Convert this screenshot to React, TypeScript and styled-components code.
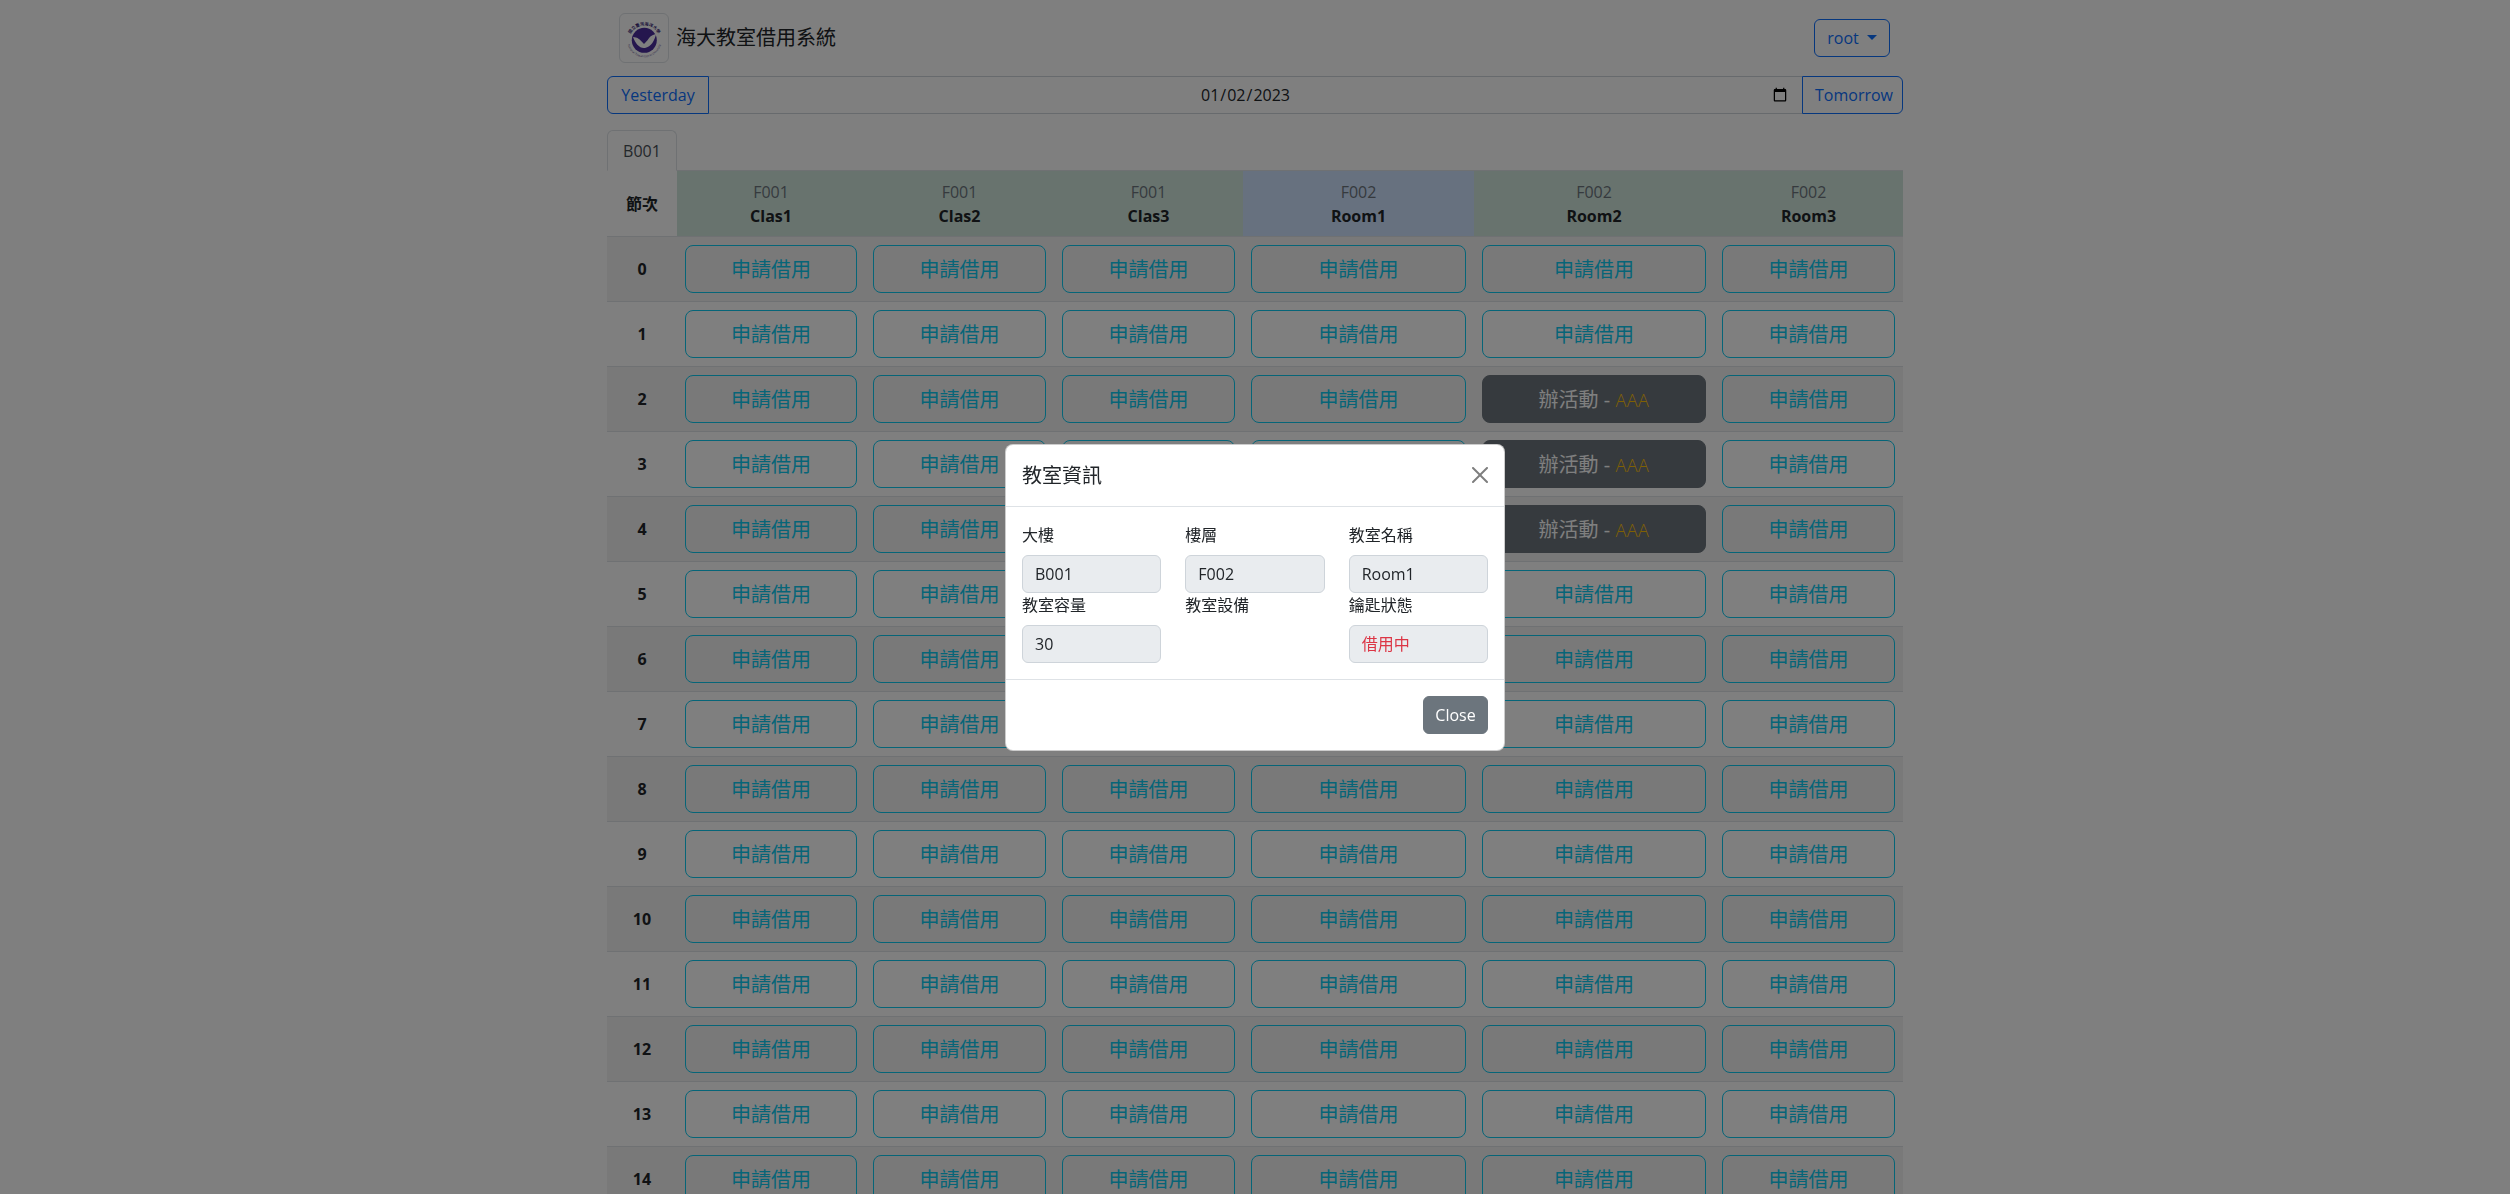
import { createGlobalStyle, styled } from "styled-components";

const GlobalStyle = createGlobalStyle`
  html, body {
    margin: 0;
    height: 100%;
    overflow: hidden;
    background: #fff;
  }
  body {
    font-family: "Open Sans", "Noto Sans CJK TC", sans-serif;
    font-size: 16px;
    line-height: 24px;
    color: #212529;
  }
  * {
    box-sizing: border-box;
  }
`;

const Container = styled.div`
  width: 1296px;
  margin: 0 auto;
`;

const Navbar = styled.nav`
  height: 76px;
  display: flex;
  align-items: center;
  justify-content: space-between;
  padding: 0 13px 0 12px;
`;

const Brand = styled.div`
  display: flex;
  align-items: center;
  gap: 7px;
  font-size: 20px;
  line-height: 24px;
  padding-bottom: 1px;
`;

const Thumbnail = styled.div`
  width: 50px;
  height: 50px;
  padding: 4px;
  border: 1px solid #dee2e6;
  border-radius: 6px;
  background: #fff;
  display: flex;
  flex: none;
`;

const OutlineButton = styled.button`
  height: 38px;
  padding: 0 12px;
  font: inherit;
  color: #0d6efd;
  background: transparent;
  border: 1px solid #0d6efd;
  border-radius: 6px;
`;

const UserButton = styled(OutlineButton)`
  width: 76px;
  display: flex;
  align-items: center;
  justify-content: center;
  gap: 8px;
  &::after {
    content: "";
    border-top: 5px solid #0d6efd;
    border-left: 5px solid transparent;
    border-right: 5px solid transparent;
    margin-top: -2px;
  }
`;

const DateGroup = styled.div`
  display: flex;
  height: 38px;
`;

const YesterdayButton = styled(OutlineButton)`
  width: 102px;
  border-radius: 6px 0 0 6px;
`;

const TomorrowButton = styled(OutlineButton)`
  width: 101px;
  border-radius: 0 6px 6px 0;
`;

const DateInput = styled.input`
  flex: 1;
  min-width: 0;
  height: 38px;
  padding: 6px 12px;
  font: inherit;
  color: #212529;
  text-align: center;
  background: #fff;
  border: 1px solid #ced4da;
  border-left: 0;
  border-right: 0;
`;

const Tabs = styled.div`
  margin-top: 16px;
  height: 41px;
  display: flex;
  border-bottom: 1px solid #dee2e6;
`;

const Tab = styled.div`
  width: 70px;
  height: 41px;
  padding-top: 8px;
  text-align: center;
  color: #495057;
  background: #fff;
  border: 1px solid #dee2e6;
  border-bottom-color: #fff;
  border-radius: 6px 6px 0 0;
`;

const Table = styled.table`
  width: 1296px;
  table-layout: fixed;
  border-collapse: separate;
  border-spacing: 0;
`;

const HeadCell = styled.th<{ $tone?: "green" | "blue" }>`
  height: 66px;
  padding: 0 8px;
  text-align: center;
  font-weight: 700;
  background: ${({ $tone }) =>
    $tone === "green" ? "#d1e7dd" : $tone === "blue" ? "#cfe2ff" : "#fff"};
  border-bottom: 1px solid #dee2e6;
`;

const Floor = styled.div`
  font-weight: 400;
  color: #6c757d;
`;

const Row = styled.tr`
  &:nth-child(odd) td {
    background: #f2f2f2;
  }
`;

const Cell = styled.td`
  height: 65px;
  padding: 8px;
  text-align: center;
  vertical-align: middle;
  background: #fff;
  border-bottom: 1px solid #dee2e6;
`;

const PeriodCell = styled(Cell)`
  font-weight: 700;
`;

const SlotButton = styled.button`
  display: block;
  width: 100%;
  height: 48px;
  padding: 2px 0 0;
  font: inherit;
  font-size: 20px;
  color: #0dcaf0;
  background: transparent;
  border: 1px solid #0dcaf0;
  border-radius: 8px;
`;

const BookedButton = styled(SlotButton)`
  color: #fff;
  background: #6c757d;
  border-color: #6c757d;
`;

const Borrower = styled.span`
  color: #ffc107;
  font-size: 18px;
  font-weight: 300;
  letter-spacing: 0.5px;
`;

const Backdrop = styled.div`
  position: fixed;
  inset: 0;
  background: rgba(0, 0, 0, 0.5);
`;

const ModalLayer = styled.div`
  position: fixed;
  inset: 0;
  display: flex;
  align-items: center;
  justify-content: center;
`;

const Modal = styled.div`
  width: 500px;
  background: #fff;
  border: 1px solid rgba(0, 0, 0, 0.2);
  border-radius: 8px;
`;

const ModalHeader = styled.div`
  height: 62px;
  padding: 0 16px;
  display: flex;
  align-items: center;
  justify-content: space-between;
  border-bottom: 1px solid #dee2e6;
  font-size: 20px;
`;

const ModalTitle = styled.span`
  padding-top: 2px;
`;

const CloseIcon = styled.svg`
  width: 16px;
  height: 16px;
  opacity: 0.5;
  fill: #000;
`;

const ModalBody = styled.div`
  padding: 16px;
  display: grid;
  grid-template-columns: repeat(3, 139.33px);
  column-gap: 24px;
`;

const Field = styled.div`
  display: flex;
  flex-direction: column;
`;

const Label = styled.label`
  margin-bottom: 8px;
`;

const ReadOnlyBox = styled.div<{ $danger?: boolean }>`
  height: 38px;
  padding: 6px 12px;
  color: ${({ $danger }) => ($danger ? "#dc3545" : "#212529")};
  background: #e9ecef;
  border: 1px solid #ced4da;
  border-radius: 6px;
`;

const ModalFooter = styled.div`
  padding: 16px;
  display: flex;
  justify-content: flex-end;
  border-top: 1px solid #dee2e6;
`;

const CloseButton = styled.button`
  width: 65px;
  height: 38px;
  padding: 0;
  font: inherit;
  color: #fff;
  background: #6c757d;
  border: 1px solid #6c757d;
  border-radius: 6px;
`;

const Logo = () => (
  <svg viewBox="0 0 40 40" width="40" height="40">
    <defs>
      <path id="ringTop" d="M5.3 22.3a15 15 0 0 1 30 0" />
      <path id="ringBottom" d="M3.3 22.3a17 17 0 0 0 34 0" />
    </defs>
    <text fontSize="4.2" fontWeight="700" fill="#3c2a78">
      <textPath href="#ringTop" startOffset="50%" textAnchor="middle">
        國立臺灣海洋大學
      </textPath>
    </text>
    <text fontSize="2.8" fill="#5a4a8c">
      <textPath href="#ringBottom" startOffset="50%" textAnchor="middle">
        National Taiwan Ocean University
      </textPath>
    </text>
    <circle cx="20.3" cy="22.3" r="12.5" fill="#4a2d9c" />
    <path
      d="M9 19c4 0 8 3 11 6 3-4 7-8 12-9-1 6-5 13-11 14-5 1-10-5-12-11z"
      fill="#fff"
    />
    <path
      d="M14 18c3 1 5 3 6 5 2-3 4-5 7-7-2 5-5 8-7 10-2-2-5-5-6-8z"
      fill="#4a2d9c"
    />
  </svg>
);

const columns = [
  { width: 188, floor: "F001", room: "Clas1", tone: "green" },
  { width: 189, floor: "F001", room: "Clas2", tone: "green" },
  { width: 189, floor: "F001", room: "Clas3", tone: "green" },
  { width: 231, floor: "F002", room: "Room1", tone: "blue" },
  { width: 240, floor: "F002", room: "Room2", tone: "green" },
  { width: 189, floor: "F002", room: "Room3", tone: "green" },
] as const;

const periods = Array.from({ length: 15 }, (_, i) => i);

const isBooked = (period: number, room: string) =>
  room === "Room2" && period >= 2 && period <= 4;

export default function App() {
  return (
    <>
      <GlobalStyle />
      <Container>
        <Navbar>
          <Brand>
            <Thumbnail>
              <Logo />
            </Thumbnail>
            海大教室借用系統
          </Brand>
          <UserButton>root</UserButton>
        </Navbar>
        <DateGroup>
          <YesterdayButton>Yesterday</YesterdayButton>
          <DateInput type="date" defaultValue="2023-01-02" />
          <TomorrowButton>Tomorrow</TomorrowButton>
        </DateGroup>
        <Tabs>
          <Tab>B001</Tab>
        </Tabs>
        <Table>
          <colgroup>
            <col width={70} />
            {columns.map((c) => (
              <col key={c.room} width={c.width} />
            ))}
          </colgroup>
          <thead>
            <tr>
              <HeadCell>節次</HeadCell>
              {columns.map((c) => (
                <HeadCell key={c.room} $tone={c.tone}>
                  <Floor>{c.floor}</Floor>
                  {c.room}
                </HeadCell>
              ))}
            </tr>
          </thead>
          <tbody>
            {periods.map((p) => (
              <Row key={p}>
                <PeriodCell>{p}</PeriodCell>
                {columns.map((c) => (
                  <Cell key={c.room}>
                    {isBooked(p, c.room) ? (
                      <BookedButton>
                        辦活動 - <Borrower>AAA</Borrower>
                      </BookedButton>
                    ) : (
                      <SlotButton>申請借用</SlotButton>
                    )}
                  </Cell>
                ))}
              </Row>
            ))}
          </tbody>
        </Table>
      </Container>
      <Backdrop />
      <ModalLayer>
        <Modal>
          <ModalHeader>
            <ModalTitle>教室資訊</ModalTitle>
            <CloseIcon viewBox="0 0 16 16">
              <path d="M.293.293a1 1 0 0 1 1.414 0L8 6.586 14.293.293a1 1 0 1 1 1.414 1.414L9.414 8l6.293 6.293a1 1 0 0 1-1.414 1.414L8 9.414l-6.293 6.293a1 1 0 0 1-1.414-1.414L6.586 8 .293 1.707a1 1 0 0 1 0-1.414z" />
            </CloseIcon>
          </ModalHeader>
          <ModalBody>
            <Field>
              <Label>大樓</Label>
              <ReadOnlyBox>B001</ReadOnlyBox>
            </Field>
            <Field>
              <Label>樓層</Label>
              <ReadOnlyBox>F002</ReadOnlyBox>
            </Field>
            <Field>
              <Label>教室名稱</Label>
              <ReadOnlyBox>Room1</ReadOnlyBox>
            </Field>
            <Field>
              <Label>教室容量</Label>
              <ReadOnlyBox>30</ReadOnlyBox>
            </Field>
            <Field>
              <Label>教室設備</Label>
            </Field>
            <Field>
              <Label>鑰匙狀態</Label>
              <ReadOnlyBox $danger>借用中</ReadOnlyBox>
            </Field>
          </ModalBody>
          <ModalFooter>
            <CloseButton>Close</CloseButton>
          </ModalFooter>
        </Modal>
      </ModalLayer>
    </>
  );
}
